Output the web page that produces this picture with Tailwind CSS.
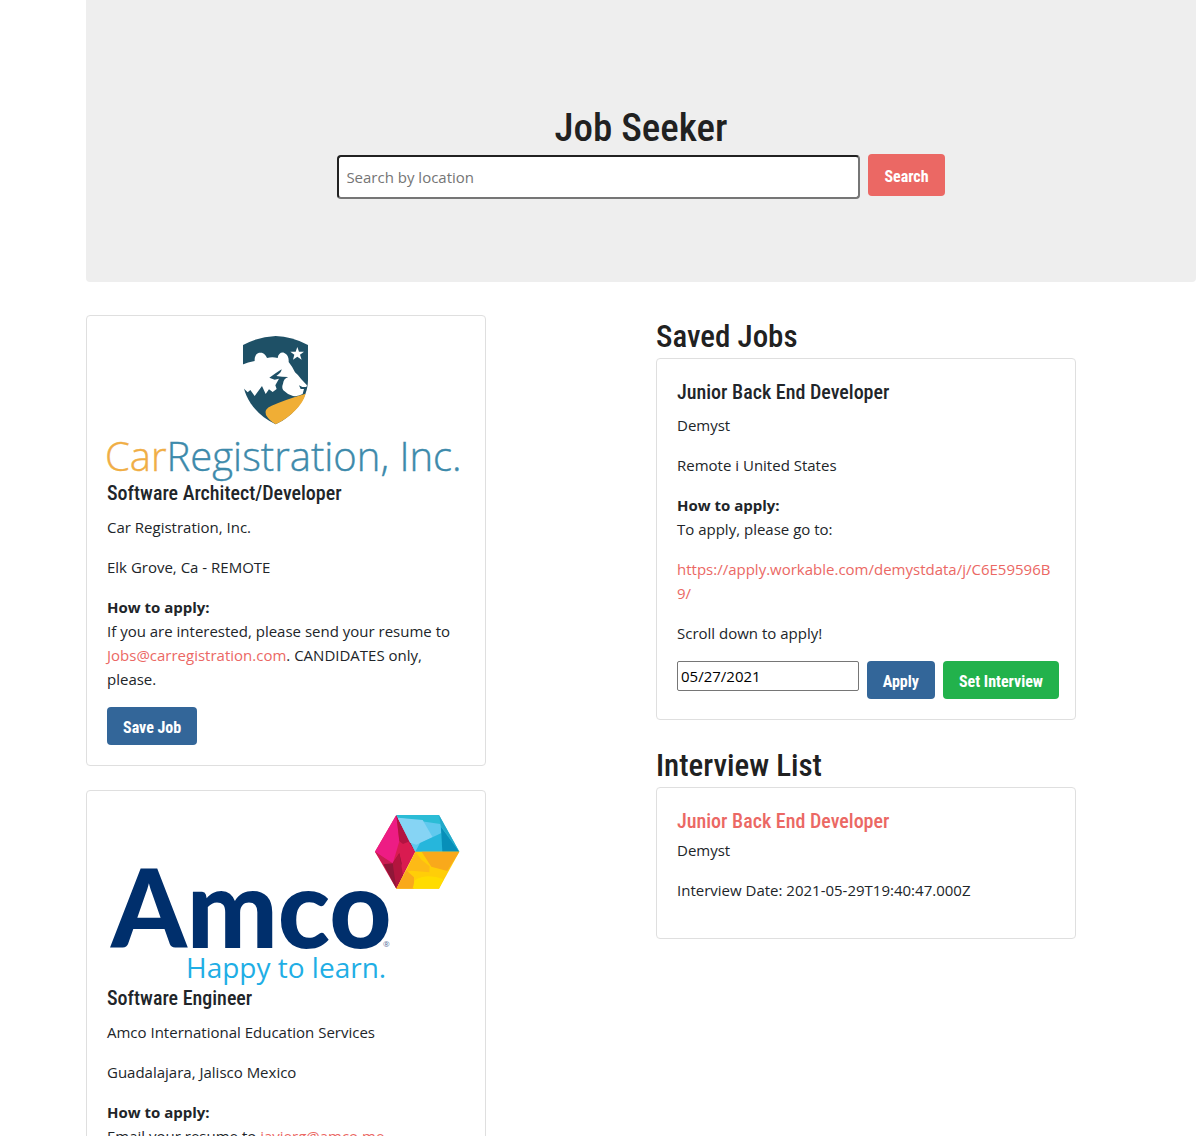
<!DOCTYPE html>
<html lang="en">
<head>
<meta charset="utf-8">
<meta name="viewport" content="width=device-width, initial-scale=1">
<title>Job Seeker</title>
<script src="https://cdn.jsdelivr.net/npm/@tailwindcss/browser@4"></script>
</head>
<body class="bg-white pl-[86px] font-['Open_Sans',sans-serif] text-[15px] leading-6 text-[#212529]">
<header class="flex flex-col items-center rounded-b bg-[#eeeeee] pt-[104px] pb-[83px]">
  <h1 class="font-['Roboto_Condensed',Roboto,sans-serif] text-[39px] leading-[48px] font-medium text-[#212121]">Job Seeker</h1>
  <form class="mt-[2px] flex w-full items-start justify-center gap-2 px-4">
    <input type="text" aria-label="Search by location" placeholder="Search by location" class="mt-px h-11 w-full max-w-[523px] rounded border-2 border-t-[#212121] border-l-[#212121] border-r-[#767676] border-b-[#767676] bg-white px-[7px] placeholder:text-[#757575]">
    <button type="button" class="h-[42px] rounded bg-[#eb6864] px-4 pt-1 font-['Roboto_Condensed',Roboto,sans-serif] text-[16px] font-bold text-white">Search</button>
  </form>
</header>

<main class="mt-[33px] flex justify-between gap-8 pr-[120px]">
  <section aria-label="Job results" class="flex w-full max-w-[400px] flex-col gap-6">
    <article class="rounded border border-[#dfdfdf] p-5">
      <svg viewBox="0 0 358 144" class="block w-full overflow-visible" role="img" aria-label="CarRegistration, Inc. logo">
        <g transform="translate(113 -11) scale(.3333)">
          <path fill="#1e5066" d="M69 60Q118 34 167 33Q216 34 264 60V165C264 220 222 272 167 298C112 272 69 220 69 165Z"/>
          <path fill="#fff" d="M66 119Q84 112 104 108C103 90 112 82 122 83C132 83 138 91 141 99Q157 95 173 99C175 86 184 80 193 84C203 88 207 99 206 111Q218 126 225 142Q236 151 244 163L261 181L259 186H247L237 181L242 192H252L248 207Q235 215 219 213Q201 208 190 196Q184 188 189 176Q191 160 205 156Q186 156 169 153Q184 144 185 133Q166 145 148 158L164 164L177 161L166 181L170 192L158 201L147 193L137 207L126 183L104 213L91 195L83 202L66 185Z"/>
          <path fill="#f0ae35" d="M257 206Q198 223 155 242Q131 252 138 270Q148 287 167 298C211 277 249 239 257 206Z"/>
          <path fill="#fff" d="M232 66L237 80H252L240 89L245 104L232 95L219 104L223 89L211 80H227Z"/>
        </g>
        <text x="-2" y="135" font-family="'Open Sans',sans-serif" font-size="40" font-weight="300" fill="#3d8aab" stroke="#3d8aab" stroke-width=".4"><tspan fill="#f0ae45" stroke="#f0ae45">Car</tspan>Registration, Inc.</text>
      </svg>
      <h2 class="mb-2 font-['Roboto_Condensed',Roboto,sans-serif] text-[20px] leading-[27px] font-medium">Software Architect/Developer</h2>
      <p class="mb-4">Car Registration, Inc.</p>
      <p class="mb-4">Elk Grove, Ca - REMOTE</p>
      <p class="font-bold">How to apply:</p>
      <p class="mb-4">If you are interested, please send your resume to <a href="mailto:Jobs@carregistration.com" class="text-[#eb6864]">Jobs@carregistration.com</a>. CANDIDATES only, please.</p>
      <button type="button" class="block h-[38px] rounded bg-[#336699] px-4 pt-1 font-['Roboto_Condensed',Roboto,sans-serif] text-[16px] font-bold text-white">Save Job</button>
    </article>

    <article class="rounded border border-[#dfdfdf] p-5">
      <svg viewBox="0 0 358 174" class="block w-full overflow-visible" role="img" aria-label="Amco, Happy to learn logo">
        <g transform="translate(253 -11) scale(.3333)">
          <path fill="#d91b50" d="M109 45L166 155L109 266L45 155Z"/>
          <path fill="#ed1c84" d="M109 45L118 124L98 192L45 155Z"/>
          <path fill="#b31341" d="M109 45L166 155L145 125L129 132L118 124Z"/>
          <path fill="#c91d52" d="M45 155L98 190L70 193Z"/>
          <path fill="#8f1738" d="M70 193L98 190L118 160L125 190L109 266Z"/>
          <path fill="#b3153e" d="M98 190L118 160L129 226L109 266Z"/>
          <path fill="#2bbcd6" d="M109 45H237L298 155H166Z"/>
          <path fill="#60c9ee" d="M113 53L241 72L244 100L166 155Z"/>
          <path fill="#86d4f4" d="M113 53L188 60L218 112L169 134L150 128Z"/>
          <path fill="#26b6dc" d="M166 155L180 129L243 100L247 155Z"/>
          <path fill="#078fb9" d="M243 81L298 155H247Z"/>
          <path fill="#22a8c9" d="M237 45L298 155L243 78Z"/>
          <path fill="#ffce08" d="M166 155H298L237 266H109Z"/>
          <path fill="#f9a91b" d="M185 155H298L262 213L214 200Z"/>
          <path fill="#fdba16" d="M166 155L185 180L209 199L208 217L156 212L139 215Z"/>
          <path fill="#f9a91b" d="M139 211L162 232V266H109Z"/>
          <path fill="#ffdc00" d="M164 241Q200 218 251 238L237 266H158Z"/>
        </g>
        <text x="4" y="137" font-family="Lato,sans-serif" font-size="108" font-weight="900" fill="#002f6c">Amco</text>
        <text x="276" y="136" font-family="'Open Sans',sans-serif" font-size="8" fill="#56709a">®</text>
        <text x="79" y="167" font-family="'Open Sans',sans-serif" font-size="28" font-weight="400" fill="#1faee5">Happy to learn.</text>
      </svg>
      <h2 class="mb-2 font-['Roboto_Condensed',Roboto,sans-serif] text-[20px] leading-[27px] font-medium">Software Engineer</h2>
      <p class="mb-4">Amco International Education Services</p>
      <p class="mb-4">Guadalajara, Jalisco Mexico</p>
      <p class="font-bold">How to apply:</p>
      <p class="mb-4">Email your resume to <a href="mailto:javierg@amco.me" class="text-[#eb6864]">javierg@amco.me</a></p>
    </article>
  </section>

  <div class="flex w-full max-w-[420px] flex-col gap-6">
    <section>
      <h2 class="mb-1 pt-1 font-['Roboto_Condensed',Roboto,sans-serif] text-[31px] leading-[35px] font-medium text-[#212121]">Saved Jobs</h2>
      <article class="rounded border border-[#dfdfdf] p-5">
        <h3 class="mb-2 font-['Roboto_Condensed',Roboto,sans-serif] text-[20px] leading-[26px] font-medium">Junior Back End Developer</h3>
        <p class="mb-4">Demyst</p>
        <p class="mb-4">Remote i United States</p>
        <p class="font-bold">How to apply:</p>
        <p class="mb-4">To apply, please go to:</p>
        <p class="mb-4"><a href="https://apply.workable.com/demystdata/j/C6E59596B9/" class="break-all text-[#eb6864]">https://apply.workable.com/demystdata/j/C6E59596B9/</a></p>
        <p class="mb-4">Scroll down to apply!</p>
        <form class="-mr-1 flex items-start gap-2">
          <input type="text" aria-label="Interview date" value="05/27/2021" class="h-[30px] w-full min-w-0 rounded-[2px] border border-[#767676] bg-white px-[3px] text-black">
          <button type="button" class="h-[38px] shrink-0 rounded bg-[#336699] px-4 pt-1 font-['Roboto_Condensed',Roboto,sans-serif] text-[16px] font-bold text-white">Apply</button>
          <button type="button" class="h-[38px] shrink-0 rounded bg-[#22b24c] px-4 pt-1 font-['Roboto_Condensed',Roboto,sans-serif] text-[16px] font-bold text-white">Set Interview</button>
        </form>
      </article>
    </section>

    <section>
      <h2 class="mb-1 pt-1 font-['Roboto_Condensed',Roboto,sans-serif] text-[31px] leading-[35px] font-medium text-[#212121]">Interview List</h2>
      <article class="rounded border border-[#dfdfdf] p-5">
        <h3 class="mb-1 font-['Roboto_Condensed',Roboto,sans-serif] text-[20px] leading-[26px] font-medium"><a href="#" class="text-[#eb6864]">Junior Back End Developer</a></h3>
        <p class="mb-4">Demyst</p>
        <p class="mb-4">Interview Date: 2021-05-29T19:40:47.000Z</p>
      </article>
    </section>
  </div>
</main>
</body>
</html>
